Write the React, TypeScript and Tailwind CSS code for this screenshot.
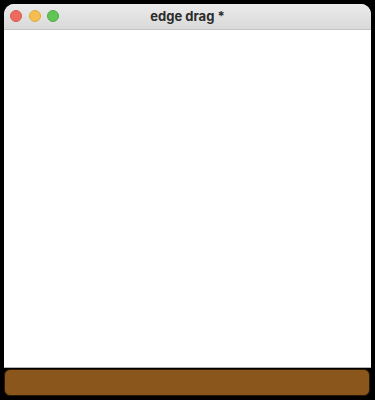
import React from "react";

export default function App() {
  return (
    <div className="w-[375px] h-[400px] bg-black px-[4px] pt-[4px] pb-[4px] flex flex-col" style={{ fontFamily: "Inter, 'Liberation Sans', sans-serif" }}>
      <div className="flex-1 flex flex-col rounded-t-[10px] overflow-hidden bg-white">
        <div className="h-[26px] shrink-0 relative flex items-center justify-center bg-gradient-to-b from-[#ebebeb] to-[#d9d9d9] border-b border-[#c4c4c4]">
          <div className="absolute left-[6px] top-[6px] flex gap-[6.5px]">
            <div className="w-[12px] h-[12px] rounded-full bg-[#ed6a5e] border border-[#d95a4f]" />
            <div className="w-[12px] h-[12px] rounded-full bg-[#f5bf4f] border border-[#dea73f]" />
            <div className="w-[12px] h-[12px] rounded-full bg-[#61c554] border border-[#52ad45]" />
          </div>
          <span className="text-[13px] font-bold text-[#2b2b2b]">edge drag *</span>
        </div>
        <div className="flex-1 bg-white border-b border-[#b5b5b5]" />
      </div>
      <div className="h-[27px] shrink-0 mt-[1px] mr-[1px] rounded-[6px] border border-[#2a1905] bg-[#8a561c]" />
    </div>
  );
}
